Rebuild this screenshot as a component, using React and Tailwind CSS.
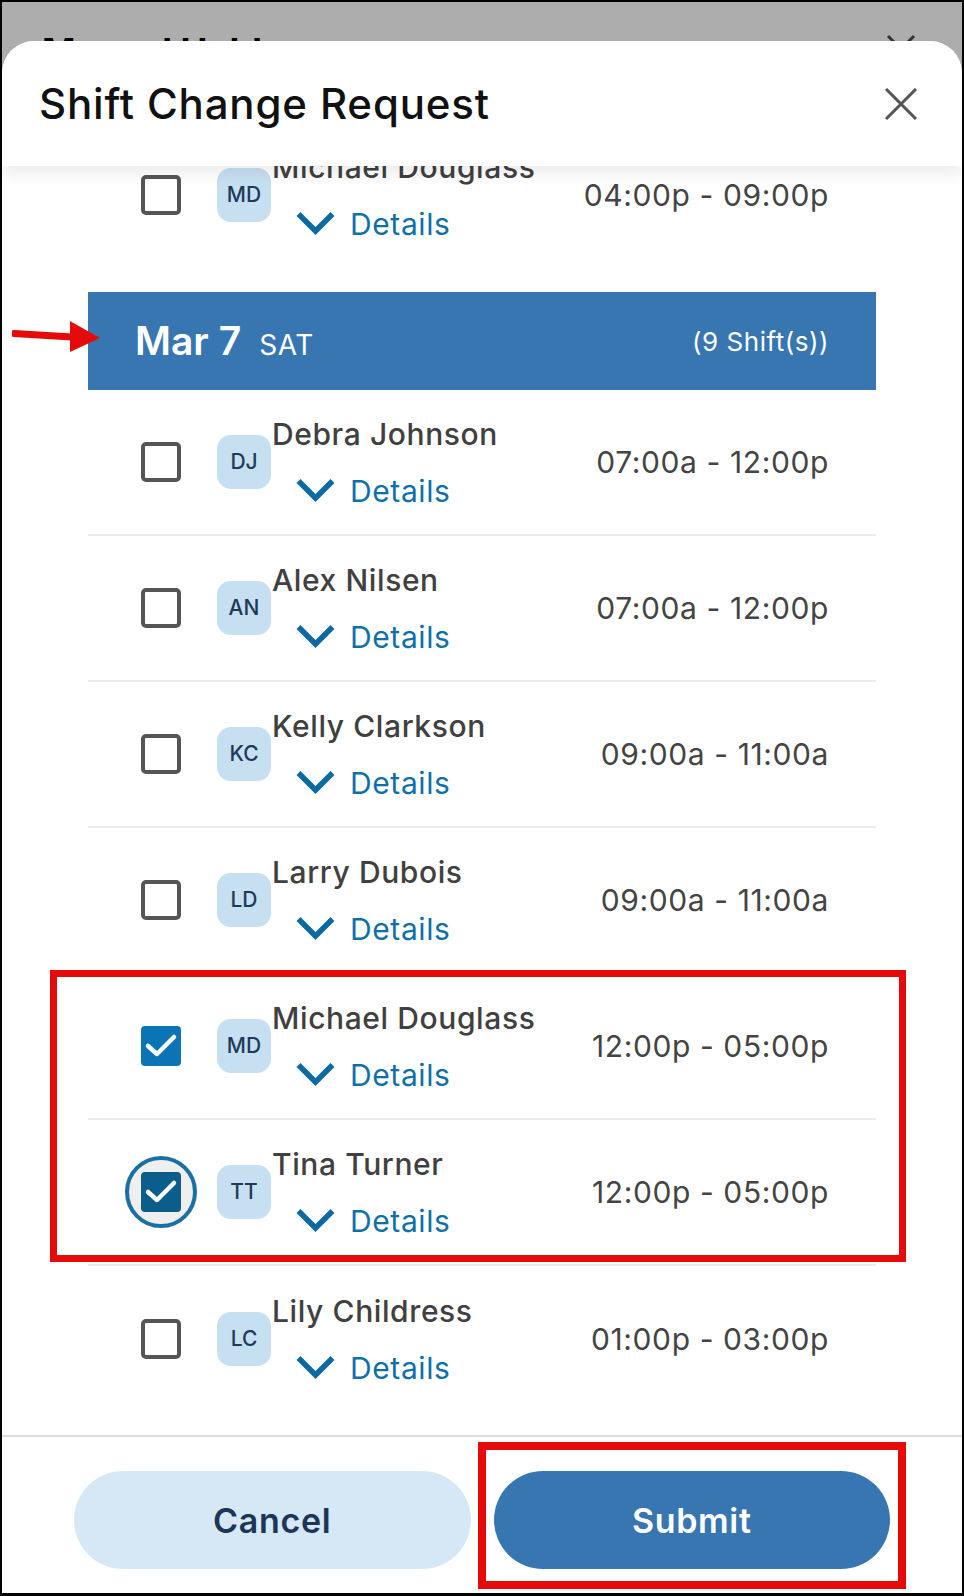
import React from "react";

const shifts = [
  { initials: "DJ", name: "Debra Johnson", time: "07:00a - 12:00p", state: "none" },
  { initials: "AN", name: "Alex Nilsen", time: "07:00a - 12:00p", state: "none" },
  { initials: "KC", name: "Kelly Clarkson", time: "09:00a - 11:00a", state: "none" },
  { initials: "LD", name: "Larry Dubois", time: "09:00a - 11:00a", state: "none" },
  { initials: "MD", name: "Michael Douglass", time: "12:00p - 05:00p", state: "checked" },
  { initials: "TT", name: "Tina Turner", time: "12:00p - 05:00p", state: "focused" },
  { initials: "LC", name: "Lily Childress", time: "01:00p - 03:00p", state: "none" },
];

const Chevron = () => (
  <svg width="39" height="24" viewBox="0 0 39 24">
    <path d="M2.5 2 L19.5 19 L36.5 2" fill="none" stroke="#0b6aa2" strokeWidth="5.5" />
  </svg>
);

const Check = () => (
  <svg width="40" height="40" viewBox="0 0 40 40">
    <path d="M7 20 L16 28 L33 11" fill="none" stroke="#fff" strokeWidth="4.5" strokeLinecap="round" strokeLinejoin="round" />
  </svg>
);

const Checkbox = ({ state }) => {
  if (state === "none") {
    return <div className="w-[40px] h-[40px] rounded-[5px] border-[4px] border-[#555]" />;
  }
  if (state === "checked") {
    return (
      <div className="w-[40px] h-[40px] rounded-[4px] bg-[#0b74b5] flex items-center justify-center">
        <Check />
      </div>
    );
  }
  return (
    <div className="relative w-[40px] h-[40px]">
      <div className="absolute -left-[16px] -top-[16px] w-[72px] h-[72px] rounded-full border-[4px] border-[#1a6fa5] bg-[#efefef]" />
      <div className="relative w-[40px] h-[40px] rounded-[4px] bg-[#0b5d8c] flex items-center justify-center">
        <Check />
      </div>
    </div>
  );
};

const ShiftRow = ({ shift, last }) => (
  <div className={"h-[146px] flex items-center " + (last ? "" : "border-b-2 border-[#ececec]")}>
    <div className="ml-[53px]">
      <Checkbox state={shift.state} />
    </div>
    <div className="ml-[36px] w-[54px] h-[54px] rounded-[14px] bg-[#c6dff1] flex items-center justify-center text-[21px] font-medium text-[#1e3a5a]">
      {shift.initials}
    </div>
    <div className="ml-px flex flex-col">
      <div className="text-[30px] leading-[34px] font-medium tracking-[0.02em] text-[#404040]">{shift.name}</div>
      <div className="mt-[23px] ml-[24px] flex items-center gap-[15px] text-[30px] leading-[34px] tracking-[0.02em] text-[#0f70a8]">
        <Chevron />
        Details
      </div>
    </div>
    <div className="ml-auto mr-[47px] text-[30px] tracking-[0.02em] text-[#444]">{shift.time}</div>
  </div>
);

export default function App() {
  return (
    <div className="relative w-[964px] h-[1596px] overflow-hidden bg-[#adadad] border-black border-t-2 border-x-2 border-b-[3px] font-['Inter',sans-serif]">
      {/* page behind the sheet */}
      <div className="flex items-start justify-between pl-[40px] pr-[45px] pt-[31px]">
        <div className="text-[36px] leading-none font-bold text-black">Manual Hold</div>
        <svg width="32" height="32" viewBox="0 0 32 32" className="mt-[0px]">
          <path d="M3 3 L29 29 M29 3 L3 29" stroke="#333" strokeWidth="3" />
        </svg>
      </div>

      {/* sheet */}
      <div className="absolute inset-x-0 top-[39px] bottom-0 bg-white rounded-t-[32px] flex flex-col overflow-hidden">
        <div className="relative z-10 h-[125px] shrink-0 bg-white rounded-t-[32px] flex items-center justify-between pl-[37px] pr-[44px] shadow-[0_8px_16px_rgba(0,0,0,0.08)]">
          <h1 className="text-[42px] font-medium tracking-[0.02em] text-[#111]">Shift Change Request</h1>
          <svg width="34" height="32" viewBox="0 0 34 32">
            <path d="M2 1 L32 31 M32 1 L2 31" stroke="#555" strokeWidth="3" />
          </svg>
        </div>

        <div className="flex-1 overflow-hidden px-[86px]">
          <div className="-mt-[44px]">
            <ShiftRow shift={{ initials: "MD", name: "Michael Douglass", time: "04:00p - 09:00p", state: "none" }} last />
            <div className="mt-[24px] h-[98px] bg-[#3776b0] flex items-center justify-between px-[47px] text-white">
              <div className="flex items-baseline gap-[18px]">
                <span className="text-[39px] font-semibold">Mar 7</span>
                <span className="text-[28px] tracking-[0.02em]">SAT</span>
              </div>
              <span className="text-[26px] tracking-[0.02em]">(9 Shift(s))</span>
            </div>
            {shifts.map((s, i) => (
              <ShiftRow key={i} shift={s} last={i === shifts.length - 1} />
            ))}
          </div>
        </div>

        <div className="shrink-0 border-t-2 border-[#dcdcdc] px-[72px] pt-[34px] pb-[24px] flex gap-[23px]">
          <button className="flex-1 h-[98px] rounded-full bg-[#d6e8f5] text-[34px] font-semibold tracking-[0.02em] text-[#1d3557]">Cancel</button>
          <button className="flex-1 h-[98px] rounded-full bg-[#3776b0] text-[34px] font-semibold tracking-[0.02em] text-white">Submit</button>
        </div>
      </div>

      {/* annotations */}
      <svg width="95" height="40" viewBox="0 0 95 40" className="absolute left-[10px] top-[316px] z-20">
        <path d="M2 15.5 L60 19" stroke="#e60a0a" strokeWidth="7" strokeLinecap="round" />
        <path d="M58 3 L88 20 L58 34 Z" fill="#e60a0a" />
      </svg>
      <div className="absolute left-[48px] top-[968px] w-[856px] h-[292px] border-[7px] border-[#e60a0a] z-20" />
      <div className="absolute left-[476px] top-[1440px] w-[428px] h-[147px] border-[8px] border-[#e60a0a] z-20" />
    </div>
  );
}
